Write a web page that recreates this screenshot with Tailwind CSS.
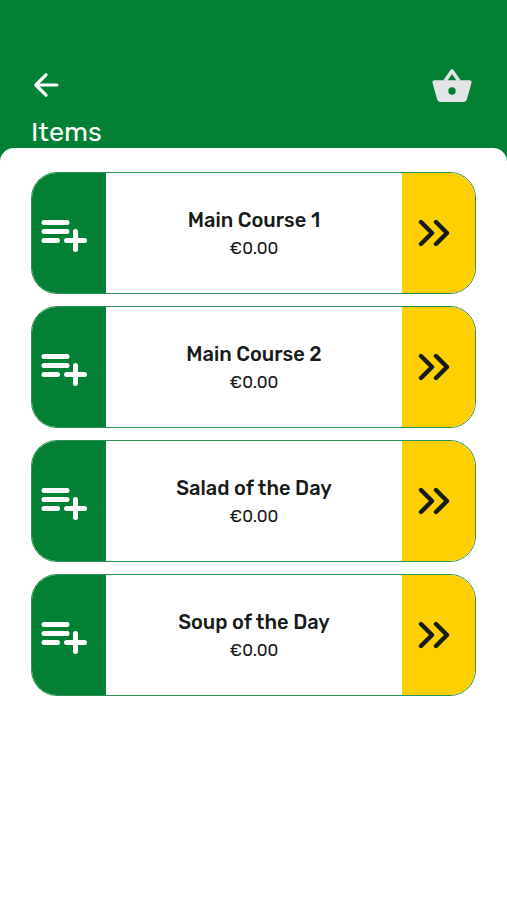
<!DOCTYPE html>
<html lang="en">
<head>
<meta charset="utf-8">
<meta name="viewport" content="width=device-width, initial-scale=1">
<title>Items</title>
<script src="https://cdn.jsdelivr.net/npm/@tailwindcss/browser@4"></script>
</head>
<body class="flex min-h-screen flex-col bg-[#028134] font-[Rubik,Roboto,sans-serif] text-[#171b1a]">
<svg class="hidden" aria-hidden="true">
  <symbol id="add" viewBox="0 0 46 33">
    <path d="M3 3.5H26M3 12.5H26M3 21.5H16.5M25.5 21.5H43.5M34.5 12.5V30.5" fill="none" stroke="#fff" stroke-width="5" stroke-linecap="round"/>
  </symbol>
  <symbol id="more" viewBox="0 0 32 28">
    <path d="M3 3L14 14L3 25M18 3L29 14L18 25" fill="none" stroke="#171b1a" stroke-width="4.4" stroke-linecap="round" stroke-linejoin="round"/>
  </symbol>
</svg>
<header class="px-[31px] pt-[66px]">
  <div class="flex items-center justify-between">
    <button type="button" aria-label="Back" class="flex h-[38px] w-[30px] items-center justify-center">
      <svg class="h-7 w-7" viewBox="0 0 28 28" fill="none" stroke="#fff" stroke-width="3.2" stroke-linecap="round" stroke-linejoin="round"><path d="M14 3.8L3.8 14L14 24.2M4.5 14H25"/></svg>
    </button>
    <button type="button" aria-label="Basket" class="mr-1 flex h-[38px] w-10 items-center justify-center">
      <svg class="h-9 w-10" viewBox="0 0 40 36"><path d="M13 14L20 4L27 14" fill="none" stroke="#e3e4e6" stroke-width="3.6" stroke-linejoin="round"/><path fill="#e3e4e6" fill-rule="evenodd" d="M2.3 13.3H37.7Q40 13.5 39.5 15.8L35 32Q34.2 35 31.500 35H8.5Q5.8 35 5 32L.5 15.8Q0 13.5 2.3 13.3ZM20 20.3A3.7 3.7 0 1 0 20 27.7A3.7 3.7 0 1 0 20 20.3Z"/></svg>
    </button>
  </div>
  <h1 class="mt-3 h-8 text-[27px] leading-8 text-white">Items</h1>
</header>
<main class="grow rounded-t-[14px] bg-white px-[31px] pt-6 pb-6">
  <ul class="flex flex-col gap-3">
    <li class="flex h-[122px] overflow-hidden rounded-[26px] border border-[#2c8f55]">
      <button type="button" aria-label="Add Main Course 1" class="flex w-[74px] shrink-0 items-center bg-[#028134] pl-[9px]"><svg class="mt-1 h-[33px] w-[46px]"><use href="#add"/></svg></button>
      <div class="flex grow flex-col items-center justify-center pt-0.5 text-center"><h2 class="text-xl leading-7 font-medium">Main Course 1</h2><p class="text-[17px] leading-7">€0.00</p></div>
      <button type="button" aria-label="View Main Course 1" class="flex w-[73px] shrink-0 items-center bg-[#ffd000] pl-4"><svg class="h-7 w-8"><use href="#more"/></svg></button>
    </li>
    <li class="flex h-[122px] overflow-hidden rounded-[26px] border border-[#2c8f55]">
      <button type="button" aria-label="Add Main Course 2" class="flex w-[74px] shrink-0 items-center bg-[#028134] pl-[9px]"><svg class="mt-1 h-[33px] w-[46px]"><use href="#add"/></svg></button>
      <div class="flex grow flex-col items-center justify-center pt-0.5 text-center"><h2 class="text-xl leading-7 font-medium">Main Course 2</h2><p class="text-[17px] leading-7">€0.00</p></div>
      <button type="button" aria-label="View Main Course 2" class="flex w-[73px] shrink-0 items-center bg-[#ffd000] pl-4"><svg class="h-7 w-8"><use href="#more"/></svg></button>
    </li>
    <li class="flex h-[122px] overflow-hidden rounded-[26px] border border-[#2c8f55]">
      <button type="button" aria-label="Add Salad of the Day" class="flex w-[74px] shrink-0 items-center bg-[#028134] pl-[9px]"><svg class="mt-1 h-[33px] w-[46px]"><use href="#add"/></svg></button>
      <div class="flex grow flex-col items-center justify-center pt-0.5 text-center"><h2 class="text-xl leading-7 font-medium">Salad of the Day</h2><p class="text-[17px] leading-7">€0.00</p></div>
      <button type="button" aria-label="View Salad of the Day" class="flex w-[73px] shrink-0 items-center bg-[#ffd000] pl-4"><svg class="h-7 w-8"><use href="#more"/></svg></button>
    </li>
    <li class="flex h-[122px] overflow-hidden rounded-[26px] border border-[#2c8f55]">
      <button type="button" aria-label="Add Soup of the Day" class="flex w-[74px] shrink-0 items-center bg-[#028134] pl-[9px]"><svg class="mt-1 h-[33px] w-[46px]"><use href="#add"/></svg></button>
      <div class="flex grow flex-col items-center justify-center pt-0.5 text-center"><h2 class="text-xl leading-7 font-medium">Soup of the Day</h2><p class="text-[17px] leading-7">€0.00</p></div>
      <button type="button" aria-label="View Soup of the Day" class="flex w-[73px] shrink-0 items-center bg-[#ffd000] pl-4"><svg class="h-7 w-8"><use href="#more"/></svg></button>
    </li>
  </ul>
</main>
</body>
</html>
